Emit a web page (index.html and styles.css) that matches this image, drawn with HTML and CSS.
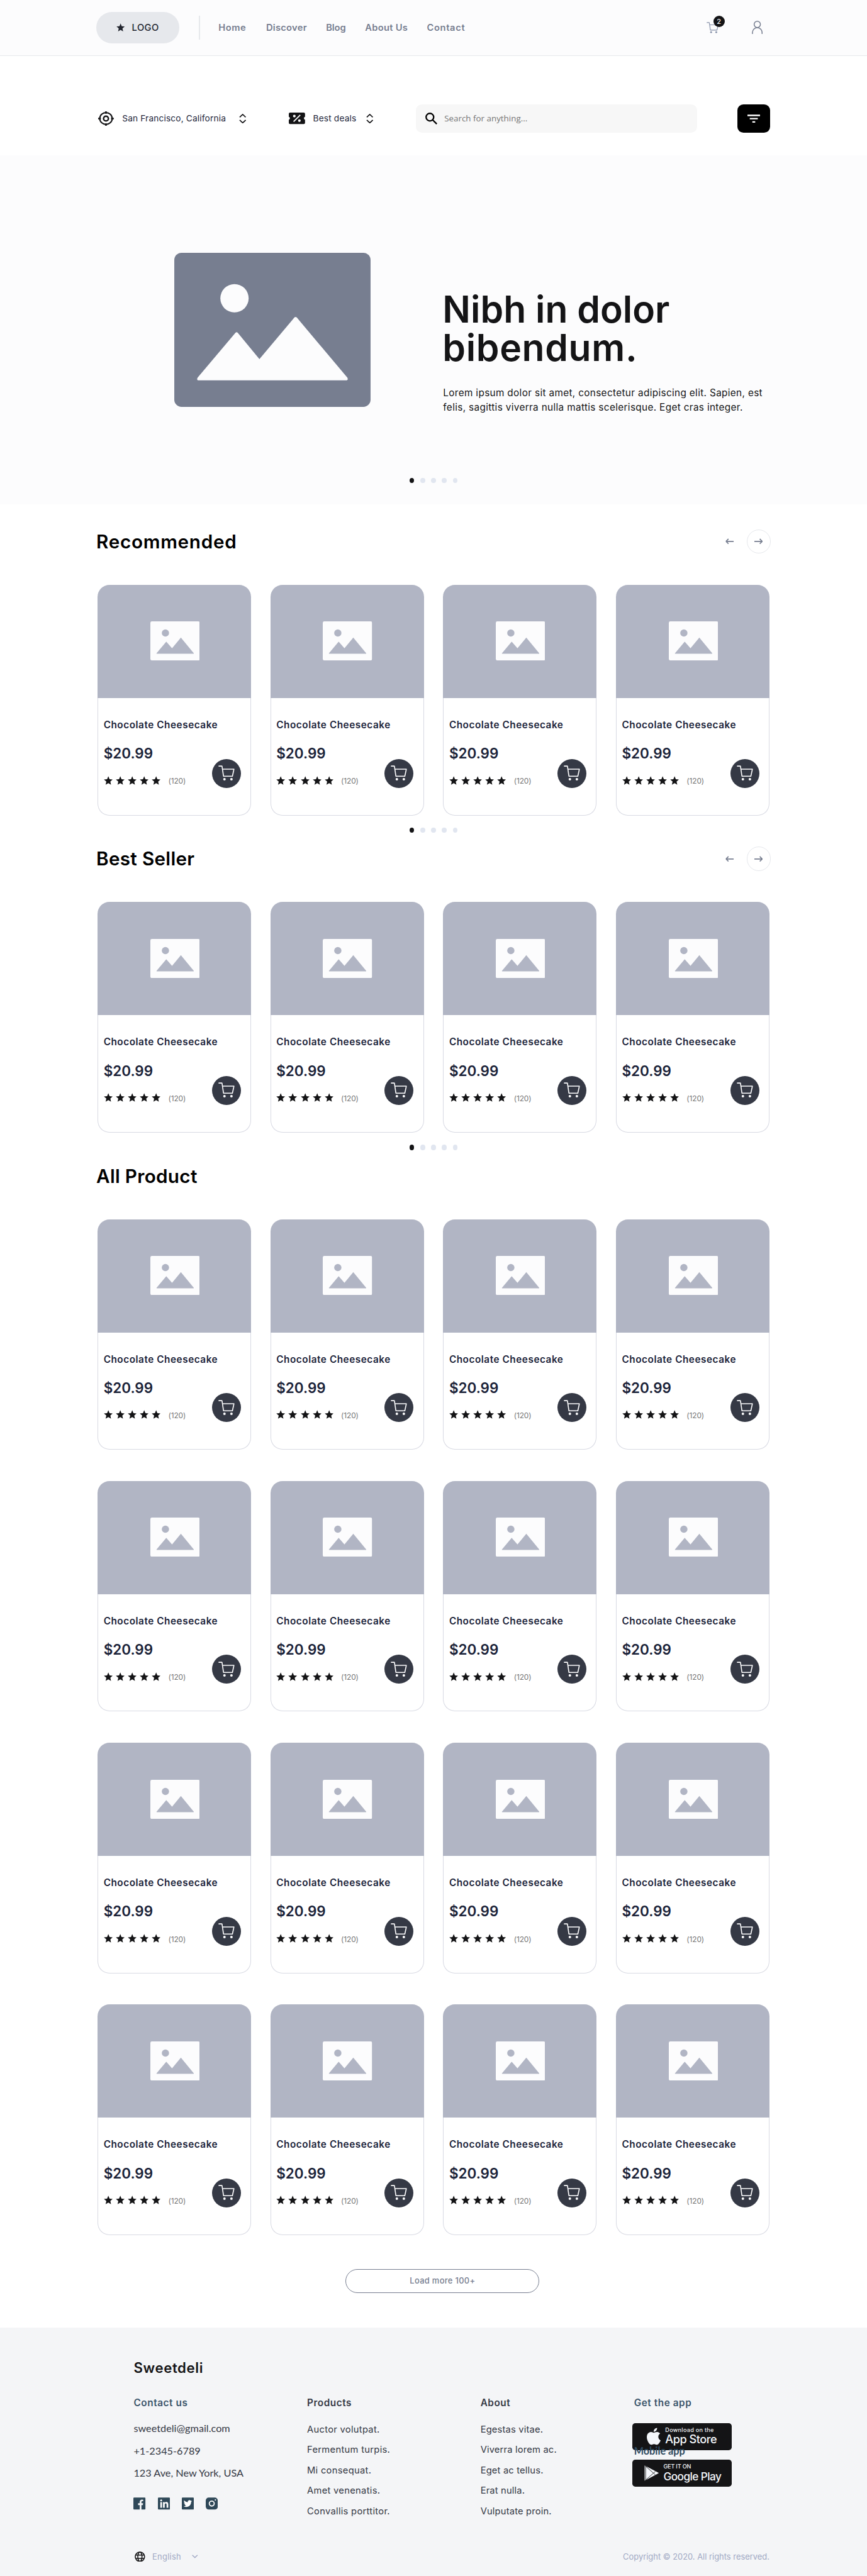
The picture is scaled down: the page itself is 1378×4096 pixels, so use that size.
FILE: index.html
```html
<!DOCTYPE html>
<html lang="en">
<head>
<meta charset="utf-8">
<title>Sweetdeli</title>
<link rel="stylesheet" href="styles.css">
</head>
<body>
<svg class="sprite" aria-hidden="true">
  <symbol id="star" viewBox="0 0 24 24"><path d="M12 .6l3.3 7.8 8.4.7-6.4 5.6 1.9 8.4-7.2-4.4-7.2 4.4 1.9-8.4L.3 9.1l8.4-.7z"/></symbol>
  <symbol id="cart" viewBox="0 0 27 26"><path d="M1 1.2h4.6a.6.6 0 0 1 .6.5L8.6 18h14.8L26 6.3H7" fill="none" stroke="currentColor" stroke-width="1.7" stroke-linejoin="round" stroke-linecap="round"/><circle cx="10.2" cy="23" r="2.1"/><circle cx="21.8" cy="23" r="2.1"/></symbol>
  <symbol id="updown" viewBox="0 0 12 16"><path d="M1 5.6L6 1l5 4.6M1 10.4L6 15l5-4.6" fill="none" stroke="currentColor" stroke-width="1.8"/></symbol>
  <symbol id="arrow" viewBox="0 0 14 10"><path d="M0 5h12.5M9 1l4 4-4 4" fill="none" stroke="currentColor" stroke-width="1.8"/></symbol>
  <symbol id="picture" viewBox="0 0 82 65"><rect width="82" height="65" rx="2.5" fill="#fcfcfd"/><circle cx="25" cy="19.3" r="6"/><path d="M10.2 53L26.4 33.7 36 44.7 50.7 27 72.2 53q.4.7-.5.7H10.7q-.9 0-.5-.7z"/></symbol>
</svg>

<header class="header">
  <a class="logo"><svg class="logo-star"><use href="#star"/></svg><span>LOGO</span></a>
  <span class="divider"></span>
  <nav class="nav">
    <a class="n1">Home</a><a class="n2">Discover</a><a class="n3">Blog</a><a class="n4">About Us</a><a class="n5">Contact</a>
  </nav>
  <div class="account">
    <a class="bag"><svg class="bag-icon"><use href="#cart"/></svg><span class="count">2</span></a>
    <svg class="user" viewBox="0 0 18 22"><circle cx="9" cy="6" r="5.2"/><path d="M1 22v-2.5a8 8 0 0 1 16 0V22"/></svg>
  </div>
</header>

<div class="toolbar">
  <div class="picker place">
    <svg class="target" viewBox="0 0 26 24"><g fill="none" stroke="#141416"><ellipse cx="13" cy="12" rx="10.3" ry="9.8" stroke-width="2.2"/><circle cx="13" cy="12" r="4" stroke-width="2.6"/><path d="M13 0v4M13 20v4M0 12h4.5M21.5 12H26" stroke-width="2.6"/></g></svg>
    <span class="place-name">San Francisco, California</span>
    <svg class="updown"><use href="#updown"/></svg>
  </div>
  <div class="picker deals">
    <svg class="ticket" viewBox="0 0 27 19"><path fill="#141416" d="M2 0h23a2 2 0 0 1 2 2v5a2.6 2.6 0 0 0 0 5v5a2 2 0 0 1-2 2H2a2 2 0 0 1-2-2v-5a2.6 2.6 0 0 0 0-5V2a2 2 0 0 1 2-2z"/><path d="M8 15L19 4" stroke="#fff" stroke-width="2"/><circle cx="9.2" cy="5.8" r="2.2" fill="#fff"/><circle cx="17.6" cy="13.4" r="2.2" fill="#fff"/></svg>
    <span class="deals-name">Best deals</span>
    <svg class="updown"><use href="#updown"/></svg>
  </div>
  <div class="search">
    <svg class="lens" viewBox="0 0 20 20"><circle cx="7.6" cy="7.6" r="6.3"/><path d="M12 12l7 7"/></svg>
    <span class="hint">Search for anything...</span>
  </div>
  <a class="filter"><svg viewBox="0 0 22 14"><path d="M0 1.3h22M4 7h14M8.500 12.700h5" stroke="#fff" stroke-width="2.5"/></svg></a>
</div>

<section class="hero">
  <div class="hero-main">
    <svg class="hero-picture" viewBox="0 0 326 256"><rect width="326" height="256" rx="12" fill="#777e90"/><circle cx="100" cy="75.5" r="23.5" fill="#fcfcfd"/><path fill="#fcfcfd" d="M38.7 207.5L101.5 133q2-2 4 0L141.4 176.700 199.500 107.500q2-2 4 0L287.500 207.500q2 4.500-2.500 4.500H41q-4.500 0-2.300-4.500z"/></svg>
    <div class="hero-copy">
      <h1><span class="h1a">Nibh in dolor</span><br><span class="h1b">bibendum.</span></h1>
      <p><span>Lorem ipsum dolor sit amet, consectetur adipiscing elit. Sapien, est</span><br><span>felis, sagittis viverra nulla mattis scelerisque. Eget cras integer.</span></p>
    </div>
  </div>
  <div class="dots"><i></i><i></i><i></i><i></i><i></i></div>
</section>

<main class="shop">
  <section>
    <div class="head"><h2 class="rec">Recommended</h2><div class="arrows"><svg class="arrow back"><use href="#arrow"/></svg><a class="ring"><svg class="arrow"><use href="#arrow"/></svg></a></div></div>
    <div class="cards" data-count="4"></div>
    <div class="dots"><i></i><i></i><i></i><i></i><i></i></div>
  </section>
  <section>
    <div class="head"><h2>Best Seller</h2><div class="arrows"><svg class="arrow back"><use href="#arrow"/></svg><a class="ring"><svg class="arrow"><use href="#arrow"/></svg></a></div></div>
    <div class="cards" data-count="4"></div>
    <div class="dots"><i></i><i></i><i></i><i></i><i></i></div>
  </section>
  <section>
    <div class="head"><h2>All Product</h2></div>
    <div class="cards" data-count="16"></div>
  </section>
  <a class="more">Load more 100+</a>
</main>

<footer class="footer">
  <h3>Sweetdeli</h3>
  <div class="columns">
    <div class="contact">
      <h4 class="blue">Contact us</h4>
      <ul>
        <li>sweetdeli@gmail.com</li>
        <li>+1-2345-6789</li>
        <li>123 Ave, New York, USA</li>
      </ul>
      <div class="social">
        <svg viewBox="0 0 20 20"><path fill="#2f4858" d="M1.200 0h17.600A1.200 1.200 0 0 1 20 1.200v17.600a1.200 1.200 0 0 1-1.200 1.200H13.400v-7.500h2.300l.5-3h-2.800V7.700c0-1 .4-1.600 1.600-1.600h1.300V3.600a12 12 0 0 0-1.900-.2c-2.500 0-3.900 1.400-3.900 3.900v2.200H7.800v3h2.700V20H1.200A1.200 1.200 0 0 1 0 18.800V1.200A1.200 1.200 0 0 1 1.200 0z"/></svg>
        <svg viewBox="0 0 20 20"><rect width="20" height="20" rx="1.3" fill="#2f4858"/><circle cx="5.4" cy="4.7" r="1.6" fill="#fff"/><path fill="#fff" d="M4 7.500h2.800V17H4zM8.500 7.500h2.700v1.300c.5-.9 1.500-1.500 2.800-1.500 2.400 0 3.200 1.600 3.200 4V17h-2.800v-5c0-1.300-.3-2.300-1.500-2.300s-1.600 1-1.600 2.200V17H8.500z"/></svg>
        <svg viewBox="0 0 20 20"><rect width="20" height="20" rx="1.3" fill="#2f4858"/><path fill="#fff" transform="translate(3 3) scale(.58)" d="M23.953 4.570a10 10 0 01-2.825.775 4.958 4.958 0 002.163-2.723c-.951.555-2.005.959-3.127 1.184a4.920 4.920 0 00-8.384 4.482C7.690 8.095 4.067 6.130 1.640 3.162a4.822 4.822 0 00-.666 2.475c0 1.710.870 3.213 2.188 4.096a4.904 4.904 0 01-2.228-.616v.060a4.923 4.923 0 003.946 4.827 4.996 4.996 0 01-2.212.085 4.936 4.936 0 004.604 3.417 9.867 9.867 0 01-6.102 2.105c-.390 0-.779-.023-1.170-.067a13.995 13.995 0 007.557 2.209c9.053 0 13.998-7.496 13.998-13.985 0-.210 0-.420-.015-.630A9.935 9.935 0 0024 4.590z"/></svg>
        <svg viewBox="0 0 20 20"><rect width="20" height="20" rx="5" fill="#2f4858"/><circle cx="10" cy="10" r="4.1" fill="none" stroke="#fff" stroke-width="1.9"/><circle cx="16" cy="4" r="1.2" fill="#fff"/></svg>
      </div>
    </div>
    <div>
      <h4>Products</h4>
      <ul class="links"><li>Auctor volutpat.</li><li>Fermentum turpis.</li><li>Mi consequat.</li><li>Amet venenatis.</li><li>Convallis porttitor.</li></ul>
    </div>
    <div>
      <h4>About</h4>
      <ul class="links about"><li>Egestas vitae.</li><li>Viverra lorem ac.</li><li>Eget ac tellus.</li><li>Erat nulla.</li><li>Vulputate proin.</li></ul>
    </div>
    <div class="apps">
      <h4 class="blue">Get the app</h4>
      <a class="store">
        <svg class="apple" viewBox="2.2 0 19.6 24"><path fill="#f4f7fb" d="M12.152 6.896c-.948 0-2.415-1.078-3.960-1.040-2.040.027-3.910 1.183-4.961 3.014-2.117 3.675-.546 9.103 1.519 12.090 1.013 1.454 2.208 3.090 3.792 3.039 1.520-.065 2.090-.987 3.935-.987 1.831 0 2.350.987 3.960.948 1.637-.026 2.676-1.480 3.676-2.948 1.156-1.688 1.636-3.325 1.662-3.415-.039-.013-3.182-1.221-3.220-4.857-.026-3.040 2.480-4.494 2.597-4.559-1.429-2.090-3.623-2.324-4.390-2.376-2-.156-3.675 1.090-4.610 1.090zM15.530 3.830c.843-1.012 1.400-2.427 1.245-3.830-1.207.052-2.662.805-3.532 1.818-.780.896-1.454 2.338-1.273 3.714 1.338.104 2.715-.688 3.559-1.701"/></svg>
        <span class="store-text"><small>Download on the</small><b>App Store</b></span>
      </a>
      <a class="store play">
        <svg class="triangle" viewBox="0 0 24 26"><path fill="#f4f7fb" d="M.6.3L23.4 12.2q.8.500 0 1L.6 25.700z"/><path d="M1.500.8l17 15M1.500 25.200l17-15M2.300 1v24" fill="none" stroke="#141416" stroke-width=".9"/></svg>
        <span class="store-text"><small>GET IT ON</small><b>Google Play</b></span>
      </a>
      <span class="mobile">Mobile app</span>
    </div>
  </div>
  <div class="legal">
    <svg class="globe" viewBox="0 0 18 18"><g fill="none" stroke="#141416" stroke-width="1.7"><circle cx="9" cy="9" r="8"/><ellipse cx="9" cy="9" rx="3.6" ry="8"/><path d="M1.500 6.200h15M1.500 11.800h15"/></g></svg>
    <span class="lang">English</span>
    <svg class="down" viewBox="0 0 10 6"><path d="M.7.7L5 5 9.300.7" fill="none" stroke="#a1a9c4" stroke-width="1.5"/></svg>
    <span class="copy">Copyright © 2020. All rights reserved.</span>
  </div>
</footer>

<template id="card">
  <article class="card">
    <div class="thumb"><svg><use href="#picture"/></svg></div>
    <div class="info">
      <h5>Chocolate Cheesecake</h5>
      <div class="buy">
        <div>
          <div class="price">$20.99</div>
          <div class="rating"><svg><use href="#star"/></svg><svg><use href="#star"/></svg><svg><use href="#star"/></svg><svg><use href="#star"/></svg><svg><use href="#star"/></svg><span class="votes">(120)</span></div>
        </div>
        <a class="add"><svg><use href="#cart"/></svg></a>
      </div>
    </div>
  </article>
</template>
<script src="script.js"></script>
</body>
</html>
```

FILE: styles.css
```css
/* 1rem is a tenth of the 0.957 layout scale */
html { font-size: 9.5696px; }
* { box-sizing: border-box; margin: 0; padding: 0; }
body { font: 500 1.54rem/2.4rem Inter, "Liberation Sans", sans-serif; color: #141416; background: #fff; }
ul { list-style: none; }
svg { display: block; flex: none; fill: currentColor; }
.sprite { position: absolute; width: 0; height: 0; }
span, li { white-space: nowrap; }

.header { display: flex; align-items: center; height: 9.3rem; padding: 0 16rem; background: #fcfcfd; border-bottom: 1px solid #e6e8ec; }
.logo { display: flex; align-items: center; width: 13.8rem; height: 5.2rem; padding-left: 3.3rem; border-radius: 2.6rem; background: #e6e8ec; color: #23262f; letter-spacing: .03em; }
.logo-star { width: 1.4rem; height: 1.4rem; margin-right: 1.2rem; }
.divider { width: .2rem; height: 4rem; margin: 0 3.1rem 0 3.2rem; background: #e6e8ec; }
.nav { display: flex; color: #777e90; font-weight: 600; letter-spacing: .018em; }
.nav a { flex: none; }
.n1 { width: 7.9rem; letter-spacing: .034em; }
.n2 { width: 9.95rem; }
.n3 { width: 6.5rem; letter-spacing: -.005em; }
.n4 { width: 10.25rem; }
.n5 { letter-spacing: .045em; }
.account { display: flex; align-items: center; margin-left: auto; padding-right: 1.3rem; color: #777e90; }
.bag { position: relative; margin-right: 5.5rem; }
.bag-icon { width: 2rem; height: 1.93rem; color: #8590a8; }
.count { position: absolute; left: 1.05rem; top: -1rem; width: 1.9rem; height: 1.9rem; border-radius: 50%; background: #141416; color: #fcfcfd; font-size: 1.15rem; line-height: 1.9rem; text-align: center; }
.user { width: 1.8rem; height: 2.2rem; fill: none; stroke: #777e90; stroke-width: 1.6; }

.toolbar { display: flex; align-items: center; height: 16.5rem; padding: 4.3rem 16.1rem 0 16.3rem; font-weight: 400; }
.picker { display: flex; align-items: center; font-size: 1.43rem; letter-spacing: .012em; color: #23263b; }
.place { width: 31.65rem; }
.deals { width: 21.1rem; }
.target { width: 2.6rem; height: 2.4rem; margin-right: 1.4rem; }
.place-name { width: 19.4rem; }
.deals-name { width: 8.8rem; }
.updown { width: 1.2rem; height: 1.6rem; color: #141416; }
.ticket { width: 2.7rem; height: 1.9rem; margin-right: 1.35rem; }
.search { display: flex; align-items: center; width: 46.7rem; height: 4.8rem; padding-left: 1.55rem; border-radius: 1rem; background: #f7f7f7; font-family: "Open Sans", sans-serif; font-size: 1.4rem; color: #757575; }
.lens { width: 2rem; height: 2rem; margin-right: 1.2rem; fill: none; stroke: #000; stroke-width: 2.4; }
.filter { display: flex; align-items: center; justify-content: center; width: 5.4rem; height: 4.8rem; margin-left: auto; border-radius: 1rem; background: #000; }
.filter svg { width: 2.1rem; height: 1.4rem; }

.hero { height: 58rem; background: #fcfcfd; }
.hero-main { display: flex; height: 53.6rem; padding-left: 28.9rem; }
.hero-picture { width: 32.6rem; height: 25.6rem; margin: 16.2rem 12rem 0 0; }
.hero-copy { padding-top: 22.36rem; }
h1 { font-size: 6.15rem; line-height: 6.4rem; font-weight: 600; }
.h1b { letter-spacing: .011em; }
.hero p { margin: 3.21rem 0 0 .1rem; font-size: 1.6rem; font-weight: 400; letter-spacing: .023em; }
.dots { display: flex; justify-content: center; gap: 1rem; }
.dots i { width: .8rem; height: .9rem; border-radius: 50%; background: #e1e6f0; }
.dots i:first-child { background: #141416; }

.shop { height: 302.9rem; padding: 4.2rem 16rem 0; }
.head { display: flex; align-items: center; justify-content: space-between; height: 4rem; color: #000; }
h2 { font-size: 3.1rem; line-height: 4rem; font-weight: 600; letter-spacing: .01em; }
.rec { letter-spacing: .024em; }
.arrows { display: flex; align-items: center; gap: 2.1rem; color: #777e90; }
.arrow { width: 1.4rem; height: 1rem; }
.back { transform: scaleX(-1); }
.ring { display: flex; align-items: center; justify-content: center; width: 4rem; height: 4rem; border: .2rem solid #e6e8ec; border-radius: 50%; }
.cards { display: grid; grid-template-columns: repeat(4, 25.5rem); gap: 5.2rem 3.2rem; padding: 5.2rem .2rem 0; }
.shop .dots { padding: 2rem 0 2.3rem; }
.card { height: 38.3rem; display: flex; flex-direction: column; }
.thumb { display: flex; height: 18.8rem; padding: 6.1rem 0 0 8.75rem; border-radius: 2rem 2rem 0 0; background: #b1b5c4; color: #b1b5c4; }
.thumb svg { width: 8.2rem; height: 6.5rem; }
.info { flex: 1; padding: 3.34rem 1.6rem 0 .9rem; border: 1px solid #d8dae3; border-top: 0; border-radius: 0 0 2rem 2rem; color: #1b2339; }
h5 { font-size: 1.6rem; font-weight: 600; letter-spacing: .036em; }
.buy { display: flex; justify-content: space-between; margin-top: 1.92rem; }
.price { font-size: 2.35rem; line-height: 3.2rem; font-weight: 600; }
.rating { display: flex; align-items: center; gap: .5rem; height: 1.8rem; margin-top: 1.94rem; color: #141416; }
.rating svg { width: 1.5rem; height: 1.5rem; }
.votes { margin-left: .75rem; padding-top: .2rem; font-size: 1.25rem; line-height: 1.8rem; font-weight: 400; letter-spacing: -.01em; color: #777; }
.add { display: flex; flex: none; width: 4.8rem; height: 4.8rem; margin-top: 2.44rem; padding: 1.1rem 0 0 1.05rem; border-radius: 50%; background: #353945; color: #fcfcfd; }
.add svg { width: 2.7rem; height: 2.6rem; }
.more { display: flex; align-items: center; justify-content: center; width: 32.2rem; height: 4rem; margin: 5.6rem 0 0 41.4rem; border: 1px solid #777e90; border-radius: 2rem; color: #777e90; font-size: 1.35rem; letter-spacing: .025em; }

.footer { height: 41.3rem; padding: 5.13rem 16.2rem 0 22.2rem; background: #f4f5f7; color: #353945; }
h3 { font-size: 2.32rem; line-height: 3.2rem; font-weight: 600; letter-spacing: .028em; color: #141416; }
.columns { display: grid; grid-template-columns: 28.8rem 28.8rem 25.2rem 1fr; margin-top: 3.11rem; }
h4 { font-size: 1.6rem; font-weight: 600; letter-spacing: .038em; }
.blue { color: #3b556b; }
.contact ul { margin-top: 1.09rem; font: 400 1.7rem/3.7rem Lato, sans-serif; }
.social { display: flex; gap: 2rem; margin-top: 2.27rem; }
.social svg { width: 2rem; height: 2.05rem; }
.links { margin-top: 1.43rem; line-height: 3.4rem; font-weight: 400; letter-spacing: .02em; }
.about { letter-spacing: .012em; }
.apps { position: relative; }
.apps h4 { padding-left: .3rem; margin-bottom: 2.06rem; }
.store { display: flex; width: 16.5rem; height: 4.5rem; padding-left: 2.4rem; border-radius: .5rem; background: #141416; color: #f4f7fb; }
.apple { width: 2.3rem; height: 2.9rem; margin: .75rem .8rem 0 0; }
.store-text { display: flex; flex-direction: column; }
.store small { margin-top: .65rem; font-size: .95rem; line-height: 1.1rem; letter-spacing: .03em; }
.store b { font-size: 1.9rem; line-height: 2rem; font-weight: 500; letter-spacing: -.028em; }
.play { margin-top: 1.6rem; padding-left: 2rem; }
.play small { letter-spacing: -.02em; }
.play b { font-size: 1.8rem; letter-spacing: -.034em; }
.triangle { width: 2.4rem; height: 2.6rem; margin: .95rem .8rem 0 0; }
.mobile { position: absolute; left: .3rem; top: 8.04rem; font: 700 1.7rem/2rem Lato, sans-serif; color: #2f4a5f; }
.legal { display: flex; align-items: center; height: 2rem; margin-top: 4.83rem; padding-left: .15rem; font-size: 1.35rem; font-weight: 400; color: #a1a9c4; }
.globe { width: 1.75rem; height: 1.75rem; margin-right: 1.2rem; }
.lang { letter-spacing: .02em; }
.down { width: 1rem; height: .6rem; margin-left: 1.8rem; }
.copy { margin-left: auto; }
```

FILE: script.js
```js
// Fill each product grid with copies of the card template
const card = document.getElementById('card');
document.querySelectorAll('.cards').forEach(grid => {
  for (let i = 0; i < Number(grid.dataset.count); i++) grid.append(card.content.cloneNode(true));
});
```
